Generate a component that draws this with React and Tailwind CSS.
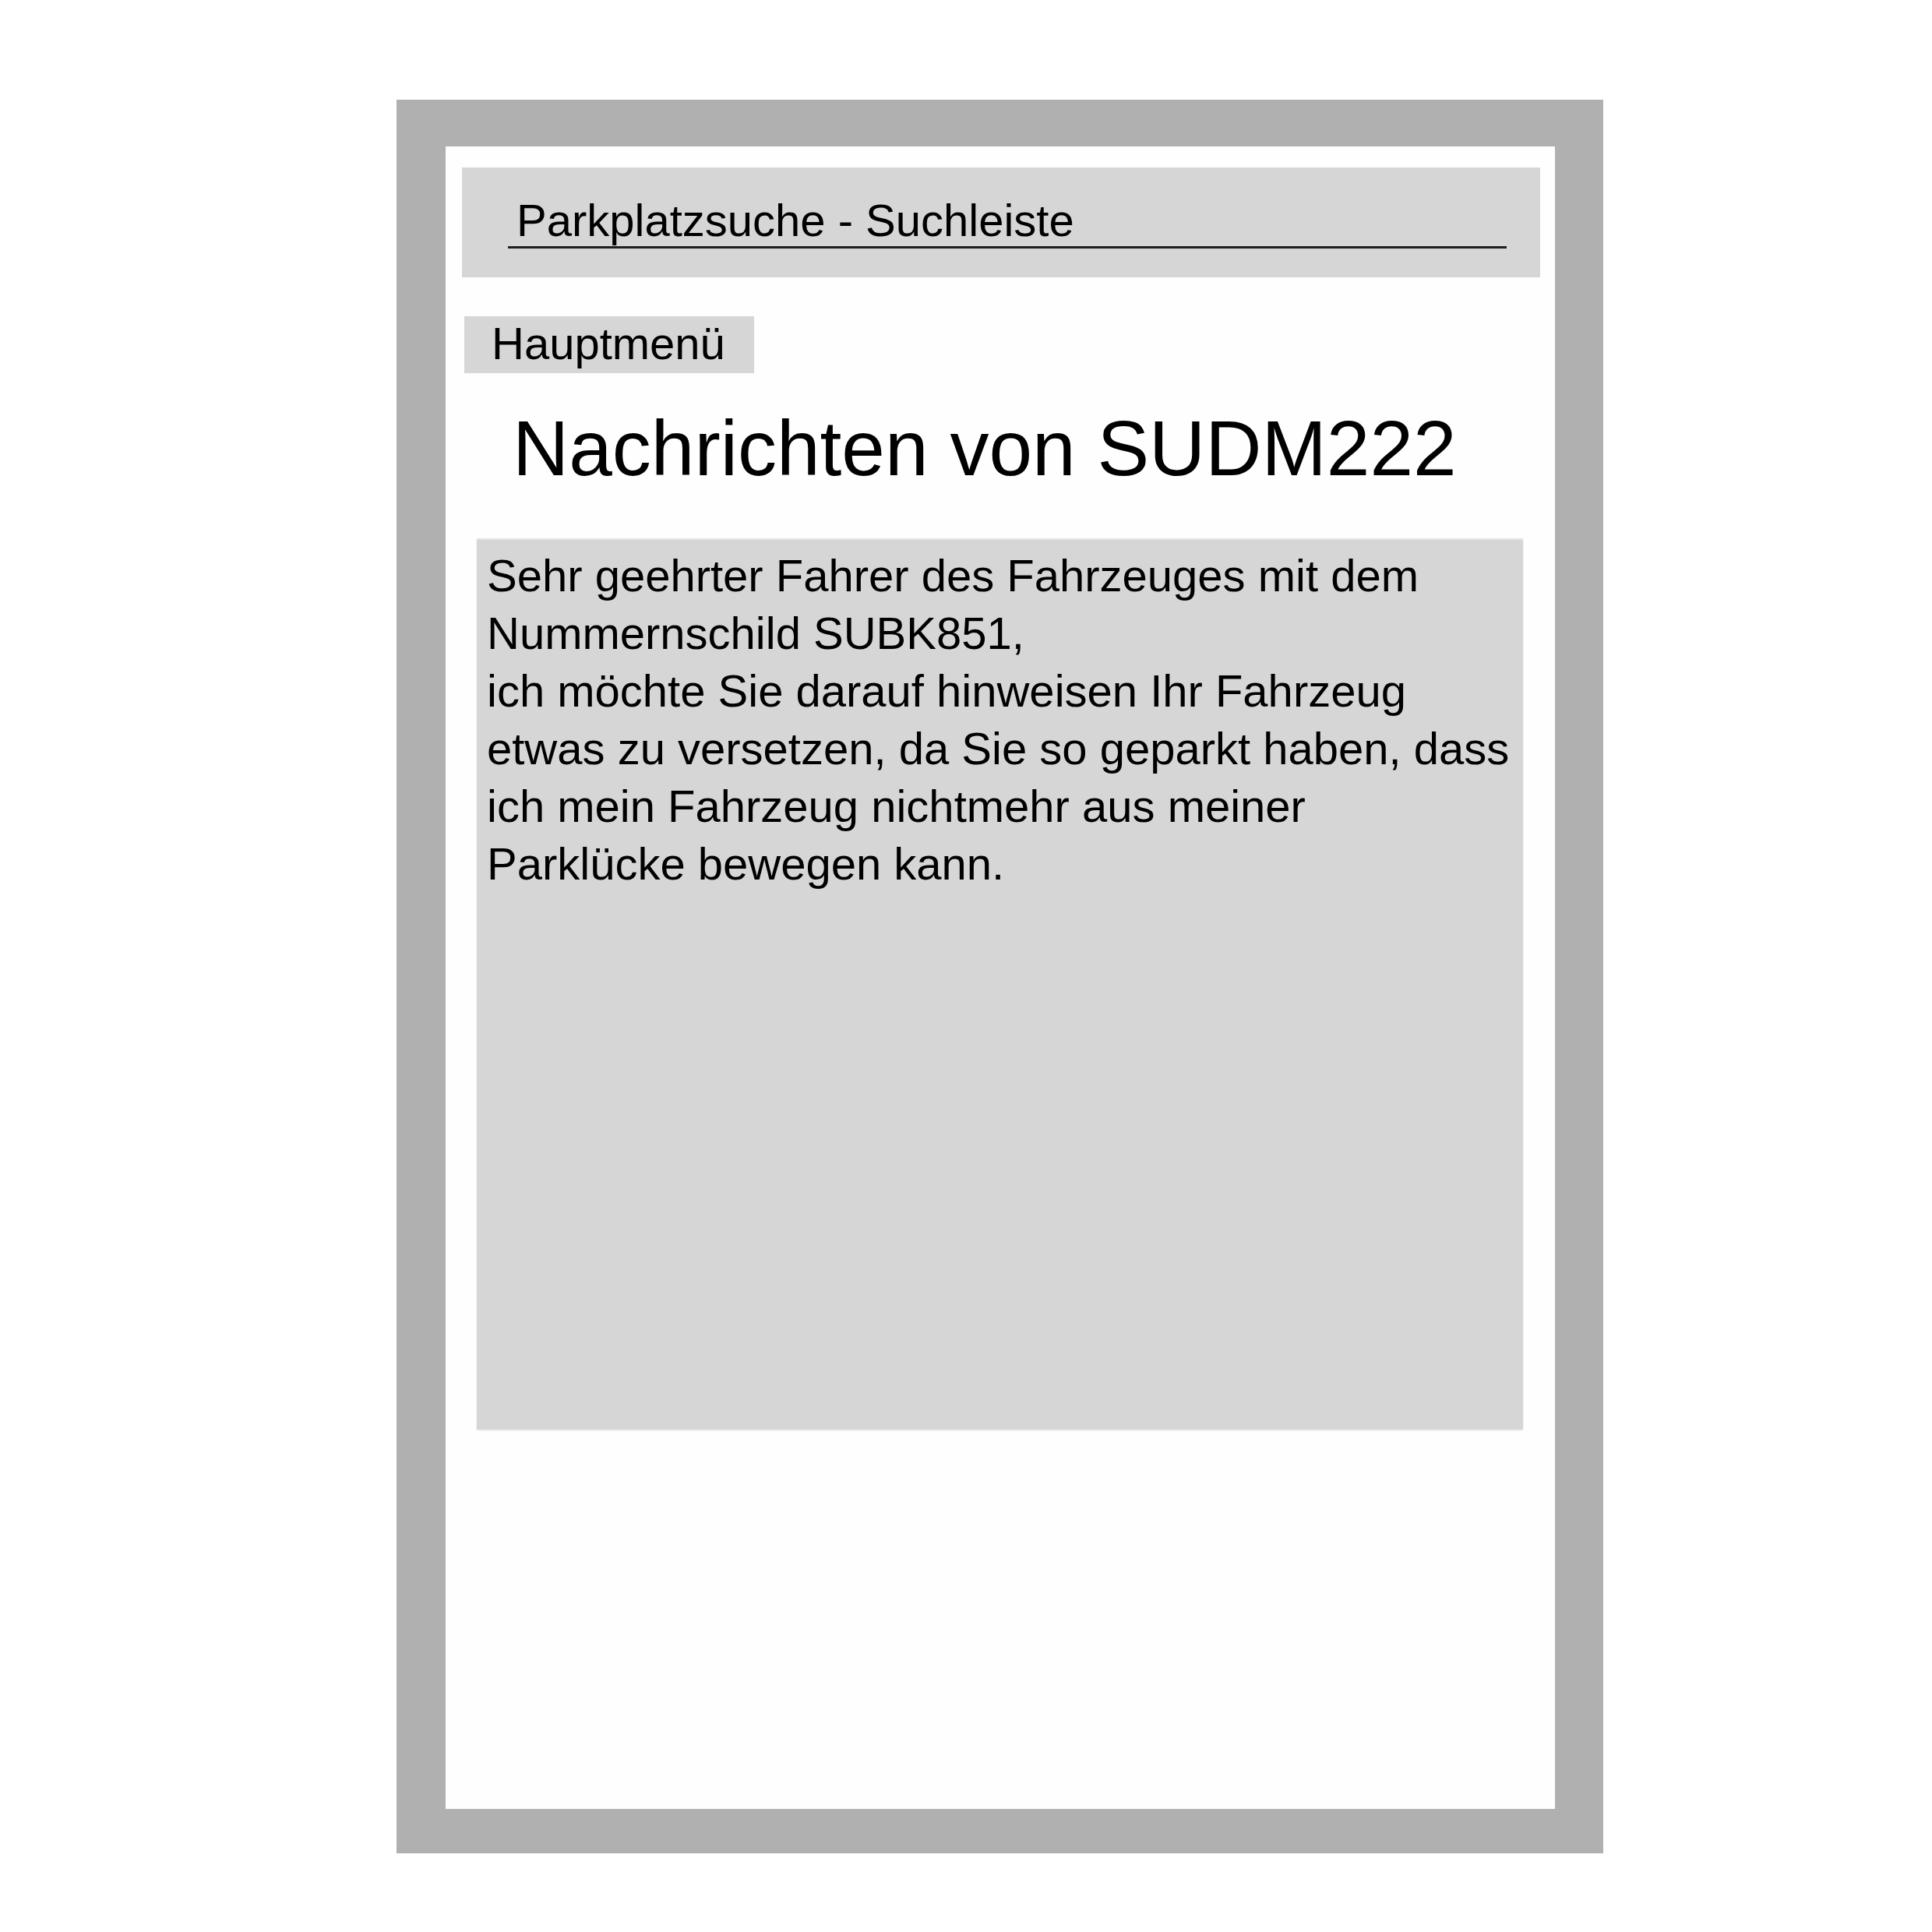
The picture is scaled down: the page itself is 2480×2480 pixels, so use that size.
import React from "react";

const lines = [
  "Sehr geehrter Fahrer des Fahrzeuges mit dem",
  "Nummernschild SUBK851,",
  "ich möchte Sie darauf hinweisen Ihr Fahrzeug",
  "etwas zu versetzen, da Sie so geparkt haben, dass",
  "ich mein Fahrzeug nichtmehr aus meiner",
  "Parklücke bewegen kann.",
];

const App = () => {
  return (
    <div className="w-[2480px] h-[2480px] bg-white pl-[509px] pt-[128px] font-['Liberation_Sans',Arial,sans-serif] text-black">
      {/* device frame */}
      <div className="w-[1549px] h-[2251px] bg-[#b0b0b0] pt-[60px] pl-[63px] pr-[62px] pb-[57px]">
        <div className="w-full h-full bg-[#fefefe] flex flex-col items-start">
          {/* search bar */}
          <div className="mt-[27px] ml-[21px] w-[1384px] h-[141px] bg-[#d6d6d6] pt-[39px]">
            <div className="ml-[59px] w-[1282px] pl-[11px] pb-[4px] text-[58px] leading-[58px] border-b-[3px] border-[#1e1e1e]">
              Parkplatzsuche - Suchleiste
            </div>
          </div>

          {/* main menu button */}
          <button className="mt-[50px] ml-[24px] w-[372px] h-[73px] bg-[#d6d6d6] pl-[35px] pb-[3px] text-left text-[58px] leading-[70px]">
            Hauptmenü
          </button>

          <h1 className="mt-[46px] ml-[86px] text-[100px] leading-[100px] font-normal whitespace-nowrap">
            Nachrichten von SUDM222
          </h1>

          {/* message body */}
          <div className="mt-[66px] ml-[40px] w-[1343px] h-[1144px] bg-[#d6d6d6] pt-[9px] pl-[13px] shadow-[0_1px_2px_rgba(0,0,0,0.12)] border-t-2 border-[#e6e6e6]">
            {lines.map((l) => (
              <div key={l} className="text-[58px] leading-[74px] whitespace-nowrap">
                {l}
              </div>
            ))}
          </div>
        </div>
      </div>
    </div>
  );
};

export default App;
